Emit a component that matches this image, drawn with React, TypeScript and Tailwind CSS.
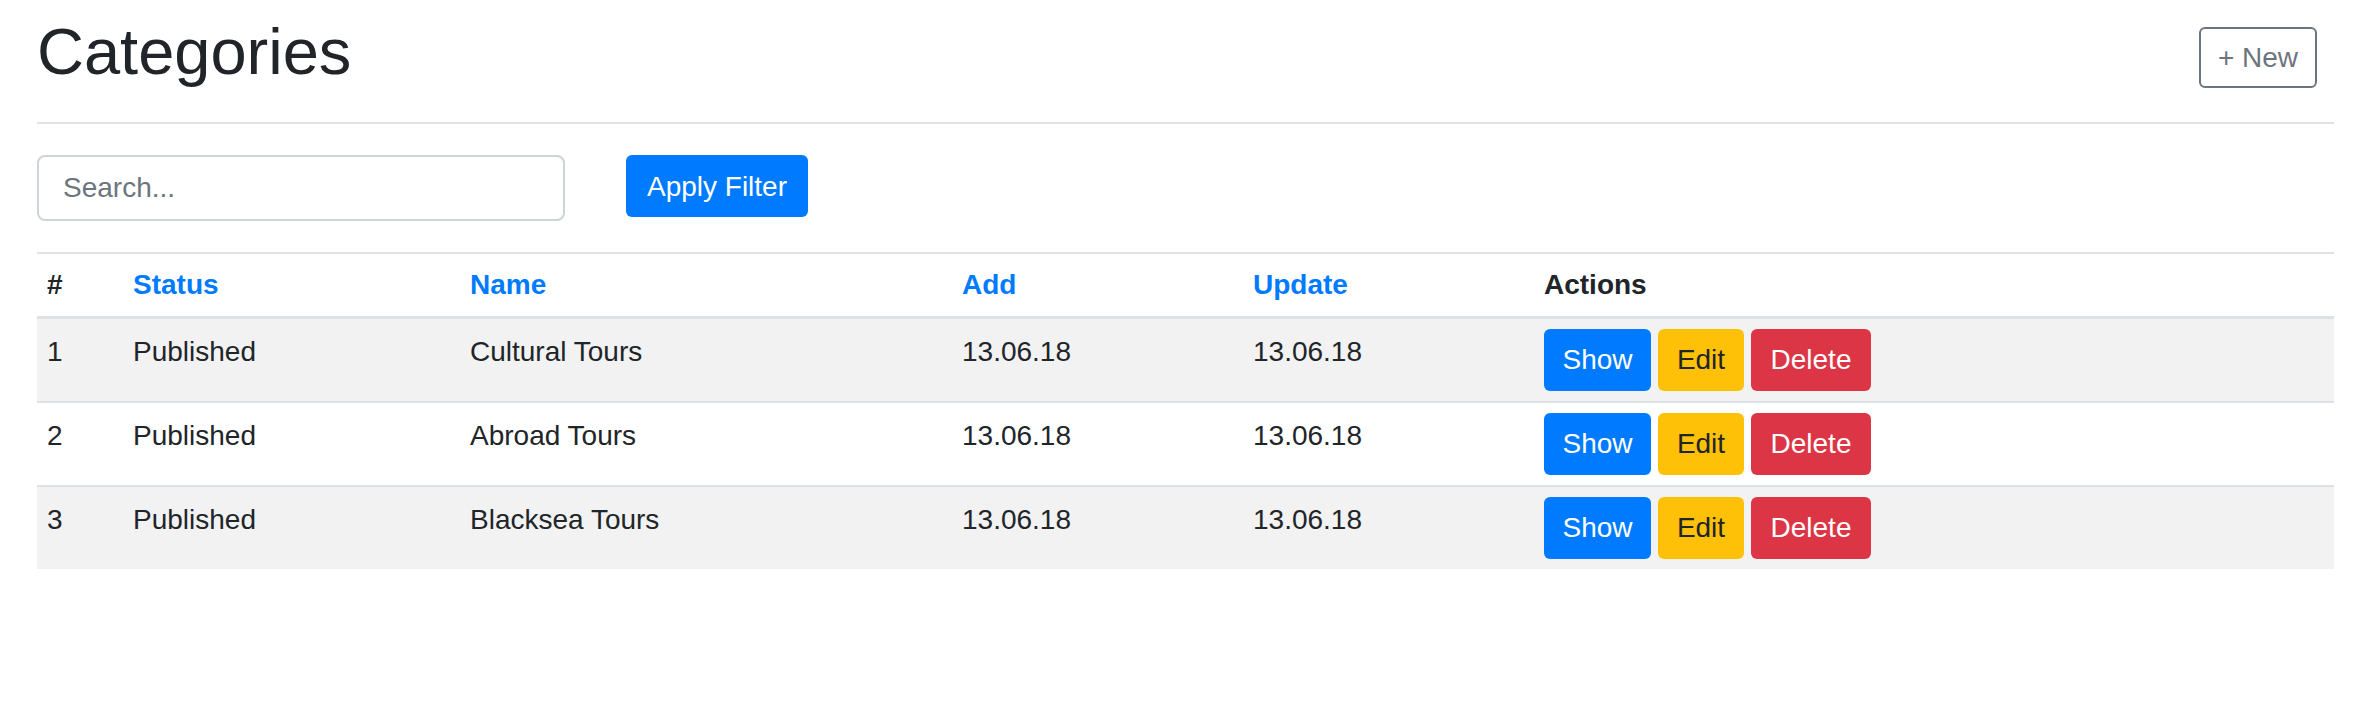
import React from "react";

const rows = [
  { id: 1, status: "Published", name: "Cultural Tours", add: "13.06.18", update: "13.06.18" },
  { id: 2, status: "Published", name: "Abroad Tours", add: "13.06.18", update: "13.06.18" },
  { id: 3, status: "Published", name: "Blacksea Tours", add: "13.06.18", update: "13.06.18" },
];

export default function App() {
  return (
    <div className="min-h-screen bg-white pl-[37px] pr-[28px] font-['Liberation_Sans',Arial,sans-serif] text-[28px] leading-[1.5] text-[#212529]">
      {/* Header */}
      <div className="flex items-start justify-between pt-[15px]">
        <h1 className="text-[65px] font-normal leading-[1.15]">Categories</h1>
        <button className="mr-[17px] mt-[12px] h-[61px] w-[118px] rounded-[6px] border-2 border-[#6c757d] text-[28px] text-[#6c757d]">
          + New
        </button>
      </div>

      <div className="mt-[32px] h-[2px] bg-[#dee2e6]" />

      {/* Filter */}
      <div className="mt-[31px] flex items-start">
        <input
          type="text"
          placeholder="Search..."
          className="h-[66px] w-[528px] rounded-[8px] border-2 border-[#ced4da] px-[24px] text-[28px] text-[#495057] outline-none placeholder:text-[#6c757d]"
        />
        <button className="ml-[61px] h-[62px] w-[182px] rounded-[6px] bg-[#007bff] pt-[2px] text-[28px] text-white">
          Apply Filter
        </button>
      </div>

      {/* Table */}
      <table className="mt-[31px] w-full table-fixed border-collapse text-left">
        <thead>
          <tr>
            <th className="w-[86px] border-t-2 border-b-[3px] border-[#dee2e6] p-[10px] align-top font-bold">#</th>
            <th className="w-[337px] border-t-2 border-b-[3px] border-[#dee2e6] p-[10px] align-top font-bold text-[#007bff]">Status</th>
            <th className="w-[492px] border-t-2 border-b-[3px] border-[#dee2e6] p-[10px] align-top font-bold text-[#007bff]">Name</th>
            <th className="w-[291px] border-t-2 border-b-[3px] border-[#dee2e6] p-[10px] align-top font-bold text-[#007bff]">Add</th>
            <th className="w-[291px] border-t-2 border-b-[3px] border-[#dee2e6] p-[10px] align-top font-bold text-[#007bff]">Update</th>
            <th className="border-t-2 border-b-[3px] border-[#dee2e6] p-[10px] align-top font-bold">Actions</th>
          </tr>
        </thead>
        <tbody>
          {rows.map((row, i) => (
            <tr key={row.id} className={i % 2 === 0 ? "bg-[#f2f2f2]" : "bg-white"}>
              <td className="border-t-2 border-[#dee2e6] px-[10px] pt-[12px] align-top">{row.id}</td>
              <td className="border-t-2 border-[#dee2e6] px-[10px] pt-[12px] align-top">{row.status}</td>
              <td className="border-t-2 border-[#dee2e6] px-[10px] pt-[12px] align-top">{row.name}</td>
              <td className="border-t-2 border-[#dee2e6] px-[10px] pt-[12px] align-top">{row.add}</td>
              <td className="border-t-2 border-[#dee2e6] px-[10px] pt-[12px] align-top">{row.update}</td>
              <td className="border-t-2 border-[#dee2e6] p-[10px] align-top">
                <div className="flex gap-[7px]">
                  <button className="h-[62px] w-[107px] rounded-[6px] bg-[#007bff] text-white">Show</button>
                  <button className="h-[62px] w-[86px] rounded-[6px] bg-[#ffc107] text-[#212529]">Edit</button>
                  <button className="h-[62px] w-[120px] rounded-[6px] bg-[#dc3545] text-white">Delete</button>
                </div>
              </td>
            </tr>
          ))}
        </tbody>
      </table>
    </div>
  );
}
